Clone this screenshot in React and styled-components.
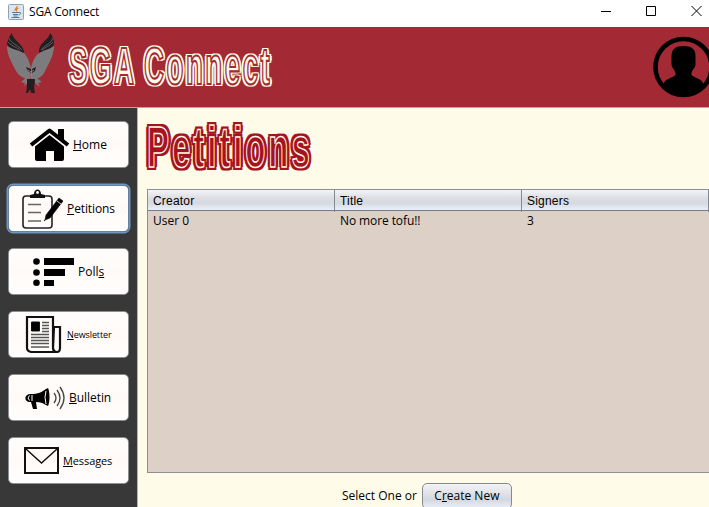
import React from 'react';
import styled, { createGlobalStyle, css } from 'styled-components';

const Global = createGlobalStyle`
  *, *::before, *::after { box-sizing: border-box; }
  html, body { margin: 0; overflow: hidden; }
  body { font: 12px/16px "Open Sans", "Noto Sans", sans-serif; color: #000; }
`;

const Window = styled.div`
  display: flex;
  flex-direction: column;
  width: 709px;
  height: 507px;
  overflow: hidden;
  background: #fffbe9;
`;

const TitleBar = styled.div`
  display: flex;
  align-items: center;
  flex: none;
  height: 27px;
  padding: 0 7px 4px 8px;
  background: #fff;
`;

const WindowTitle = styled.span`
  margin-left: 5px;
  flex: 1;
  font-size: 12px;
  letter-spacing: -0.2px;
`;

const Controls = styled.div`
  display: flex;
  gap: 35px;
  margin-bottom: 2px;
`;

const Banner = styled.header`
  display: flex;
  flex: none;
  height: 81px;
  padding-left: 6px;
  background: #a32a34;
  border-bottom: 1px solid #b5aca0;
  overflow: hidden;
`;

const Icon = styled.svg`
  display: block;
  flex: none;
  overflow: visible;
`;

const EagleIcon = styled(Icon)`
  margin-top: 6px;
`;

const AvatarIcon = styled(Icon)`
  margin: 8px -5px 0 auto;
`;

const Display = styled.h1`
  flex: none;
  margin: 0;
  font-family: "Liberation Sans", Arial, sans-serif;
  font-weight: 700;
  white-space: nowrap;
  transform-origin: 0 0;
  color: ${(p) => p.$ink};
  -webkit-text-stroke: ${(p) => p.$line}px ${(p) => p.$inner};
  text-shadow: ${(p) =>
    [[-1, -1], [0, -1], [1, -1], [1.25, 0], [1, 1], [0, 1], [-1, 1], [-1.25, 0]]
      .map(([x, y]) => `${x * p.$spreadX}px ${y * p.$spreadY}px 0 ${p.$ink}`)
      .join(', ')};
`;

const Brand = styled(Display)`
  width: 204px;
  height: 60px;
  margin: 10px 0 0 13px;
  font-size: 51px;
  line-height: 60px;
  letter-spacing: 4.8px;
  word-spacing: -3px;
  transform: scaleX(0.54);
`;

const PageTitle = styled(Display)`
  width: 166px;
  height: 66px;
  margin: 6px 0 9px 0;
  font-size: 57px;
  line-height: 66px;
  letter-spacing: 5px;
  transform: scaleX(0.58);
`;

const Body = styled.div`
  display: flex;
  flex: 1;
  min-height: 0;
`;

const Sidebar = styled.nav`
  display: flex;
  flex-direction: column;
  gap: 16px;
  flex: none;
  width: 138px;
  padding: 13px 8px 0;
  background: #383838;
  border-right: 1px solid #b5b5ad;
`;

const NavButton = styled.button`
  display: flex;
  align-items: center;
  flex: none;
  width: 121px;
  height: 47px;
  padding: 0 0 0 ${(p) => p.$start}px;
  border: 1px solid #8b8f94;
  border-radius: 5px;
  background: linear-gradient(#fffdfc, #fffaf7 50%, #fffefd);
  color: #000;
  font: ${(p) => p.$size || 12}px/16px "Open Sans", "Noto Sans", sans-serif;
  &:first-child { margin-bottom: 1px; }
  ${(p) => p.$focused && css`
    border-color: #64819f;
    box-shadow: 0 0 0 1.5px #7097c2;
  `}
`;

const NavText = styled.span`
  margin-left: ${(p) => p.$gap}px;
  letter-spacing: ${(p) => p.$track || 0}px;
`;

const Key = styled.span`
  text-decoration: underline;
  text-underline-offset: 1px;
  text-decoration-thickness: 1px;
  text-decoration-skip-ink: none;
`;

const Main = styled.main`
  flex: 1;
  min-width: 0;
  padding-left: 9px;
  overflow: hidden;
`;

const Table = styled.div`
  height: 284px;
  border: solid #8c8f96;
  border-width: 1px 0 1px 1px;
  background: #ddd0c7;
`;

const Row = styled.div`
  display: grid;
  grid-template-columns: 187px 187px 187px;
  height: 20px;
  line-height: 19px;
`;

const HeaderRow = styled(Row)`
  height: 21px;
  line-height: 22px;
  border-bottom: 1px solid #747b8c;
  background: linear-gradient(#f4f5f8, #dcdee3 40%, #d6d9df 65%, #e9effb);
  font-family: "Liberation Sans", Arial, sans-serif;
`;

const Cell = styled.span`
  padding-left: 5px;
  letter-spacing: ${(p) => p.$track || 0}px;
`;

const HeaderCell = styled(Cell)`
  border-right: 1px solid #858991;
  letter-spacing: 0.2px;
`;

const Actions = styled.div`
  display: flex;
  gap: 5px;
  padding: 10px 0 0 195px;
  line-height: 26px;
`;

const ActionButton = styled.button`
  width: 90px;
  height: 26px;
  padding: 0;
  border: 1px solid #858990;
  border-radius: 5px;
  background: linear-gradient(#f3f4f7, #dcdfe5 45%, #d4d7de 65%, #e9effa);
  color: #000;
  font: 12px/22px "Open Sans", "Noto Sans", sans-serif;
`;

const JavaCup = () => (
  <Icon width="16" height="16" viewBox="0 0 16 16" fill="none">
    <rect x=".5" y=".5" width="15" height="15" rx="1" fill="#dce5ec" stroke="#8ca3b4" />
    <path d="M9 2C10 4 6 4.500 7 7M10.500 4C8 5 8 6 9 7.500" stroke="#e17822" strokeWidth="1.100" />
    <path d="M4 8.500h7M5 10.500h5M5.500 12h4M3.500 13.500h8M11 8.500c3-.5 2 2-.5 2.500" stroke="#507b9c" />
  </Icon>
);

const Eagle = () => (
  <EagleIcon width="50" height="62" viewBox="0 0 50 62">
    <g fill="#7c7c7f">
      <path d="M1 13 18 20C21 23 24 29 25 36L24 47 20 46C13 43 11 40 9 36 4 27 1 20 1 13Z" />
      <path d="M48 13 33 20C29 23 26 29 25 36V47L31 46C37 43 38 40 40 36 45 27 48 20 48 13Z" />
      <path d="m21 44-6 5 4 1-1 3 4-3ZM29 44l7 5-4 1 2 4-5-4Z" />
    </g>
    <g fill="#211f22">
      <path d="M6 0c0 7 12 11 12 20-7-4-16-4-17-9 1-4 2-8 5-11ZM44 0c-1 7-12 10-11 20 6-4 14-4 15-9 0-4-1-8-4-11Z" />
      <path d="m20 34 5 2v4l-3-2ZM30 34l-4 2v4l3-2ZM21 46h8l-1 9 1 5h-4l-1-4-2 4h-2l1-7Z" />
    </g>
    <path d="M3 5c2 6 8 6 13 12M2 9c3 4 7 4 12 8M47 5c-2 6-7 6-12 12M47 9c-3 4-6 4-11 8" fill="none" stroke="#77777a" strokeWidth=".7" />
    <path d="m22 37 3 2 3-2M25 40v5" fill="none" stroke="#a7898e" strokeWidth=".8" />
  </EagleIcon>
);

const Avatar = () => (
  <AvatarIcon width="61" height="62" viewBox="0 0 61 62">
    <circle cx="30.500" cy="32" r="28" fill="none" stroke="#000" strokeWidth="4.600" />
    <path d="M30.500 11c8 0 12 3 12 10v8c0 4-3 5-4 9v2c4 4 11 3 12 10v4c-12 9-28 9-40 0v-4c1-7 8-6 12-10v-2c-1-4-4-5-4-9v-8c0-7 4-10 12-10Z" />
  </AvatarIcon>
);

const Home = () => (
  <Icon width="41" height="34" viewBox="0 0 41 34">
    <path d="M2 17 20.500 2.500 39 17" fill="none" stroke="#000" strokeWidth="4" strokeLinejoin="round" />
    <path d="M29 1h6v12l-6-5ZM6 18.500 20.500 7 35 18.500V31q0 2-2 2h-8V23h-8v10H8q-2 0-2-2Z" />
  </Icon>
);

const Clipboard = () => (
  <Icon width="42" height="40" viewBox="0 0 42 40" fill="none">
    <rect x="1" y="7" width="29" height="32" rx="3" stroke="#222" strokeWidth="1.600" />
    <path d="M8 9V6l4-1c0-6 7-6 7 0l4 1v3Z" fill="#111" />
    <circle cx="15.500" cy="3.500" r="1.400" fill="#fff" />
    <path d="M6 15.500h13M6 23.500h13M6 32h13" stroke="#666" strokeWidth="1.500" />
    <path d="m37 9 4 3-13 17-5 2 1-5Z" fill="#000" stroke="#000" strokeWidth=".6" />
    <path d="m35 12 4 3" stroke="#fff" strokeWidth=".8" />
    <circle cx="22.500" cy="31.500" r=".7" fill="#333" />
  </Icon>
);

const Bars = () => (
  <Icon width="41" height="28" viewBox="0 0 41 28">
    <circle cx="3.500" cy="3.500" r="3.300" /><circle cx="3.500" cy="14.500" r="3.300" /><circle cx="3.500" cy="24.800" r="3.300" />
    <path d="M11 0h30v7H11ZM11 11h21v7H11ZM11 22h10v6H11Z" />
  </Icon>
);

const News = () => (
  <Icon width="35" height="37" viewBox="0 0 35 37" fill="none" stroke="#111">
    <path d="M1 1h26v31q1 4 4 4H5q-4-1-4-4ZM28 11h6v21q0 4-3 4-4 0-4-4Z" strokeWidth="2.200" />
    <path d="M5.500 6h8v9h-8Z" fill="#000" />
    <path d="M16 6.500h7M16 9.500h7M16 12.500h7M16 15.500h7M5 18.500h18M5 21.500h18M5 24.500h18M5 27.500h18M5 31h18" stroke="#555" strokeWidth="1.300" />
  </Icon>
);

const Megaphone = () => (
  <Icon width="40" height="24" viewBox="0 0 40 24" fill="none">
    <path d="M6 8c7 0 11-2 15-5l2-1c2 4 2 14 0 18l-2-1c-3-2-6-3-10-3l1 7H8l-2-7c-7 1-8-8 0-8Z" fill="#000" />
    <path d="M4.500 9.500q-3 2.500 0 5M7 9v6M21 5q-2 6 0 13" stroke="#fff" strokeWidth="1" />
    <path d="M29 7q4 5 0 10M32 4q6 8 0 16M35 1q8 11 0 22" stroke="#444" strokeWidth="1.300" />
  </Icon>
);

const Envelope = () => (
  <Icon width="35" height="27" viewBox="0 0 35 27" fill="none" stroke="#111" strokeWidth="2">
    <path d="M1 1h33v25H1Z" /><path d="m2 2 15.500 14L33 2" strokeWidth="1.500" />
  </Icon>
);

const items = [
  { text: 'Home', key: 0, icon: Home, start: 20, gap: 3 },
  { text: 'Petitions', key: 0, icon: Clipboard, start: 13, gap: 3, track: -0.1, focused: true },
  { text: 'Polls', key: 4, icon: Bars, start: 24, gap: 4 },
  { text: 'Newsletter', key: 0, icon: News, start: 17, gap: 6, track: -0.1, size: 9 },
  { text: 'Bulletin', key: 0, icon: Megaphone, start: 16, gap: 4, track: -0.05 },
  { text: 'Messages', key: 0, icon: Envelope, start: 15, gap: 4, track: -0.1, size: 11 },
];

const Mnemonic = ({ text, at }) => (
  <>{text.slice(0, at)}<Key>{text[at]}</Key>{text.slice(at + 1)}</>
);

export default function App() {
  return (
    <Window>
      <Global />
      <TitleBar>
        <JavaCup />
        <WindowTitle>SGA Connect</WindowTitle>
        <Controls>
          <Icon width="10" height="10" stroke="#000"><path d="M0 5.500h10" /></Icon>
          <Icon width="10" height="10" fill="none" stroke="#000"><path d="M.5.5h9v9h-9Z" /></Icon>
          <Icon width="11" height="10" fill="none" stroke="#000"><path d="m.5 0 10 10m0-10-10 10" /></Icon>
        </Controls>
      </TitleBar>
      <Banner>
        <Eagle />
        <Brand $ink="#fffbe9" $inner="#a32a34" $line={2.2} $spreadX={3.4} $spreadY={2.4}>SGA Connect</Brand>
        <Avatar />
      </Banner>
      <Body>
        <Sidebar>
          {items.map(({ text, key, icon: Glyph, start, gap, size, focused, track }) => (
            <NavButton key={text} $start={start} $size={size} $focused={focused}>
              <Glyph />
              <NavText $gap={gap} $track={track}><Mnemonic text={text} at={key} /></NavText>
            </NavButton>
          ))}
        </Sidebar>
        <Main>
          <PageTitle $ink="#a5131f" $inner="#fffbe9" $line={1.5} $spreadX={4} $spreadY={2.6}>Petitions</PageTitle>
          <Table>
            <HeaderRow>
              <HeaderCell>Creator</HeaderCell>
              <HeaderCell>Title</HeaderCell>
              <HeaderCell>Signers</HeaderCell>
            </HeaderRow>
            <Row>
              <Cell>User 0</Cell>
              <Cell $track={-0.1}>No more tofu!!</Cell>
              <Cell>3</Cell>
            </Row>
          </Table>
          <Actions>
            <span>Select One or</span>
            <ActionButton><Mnemonic text="Create New" at={1} /></ActionButton>
          </Actions>
        </Main>
      </Body>
    </Window>
  );
}
